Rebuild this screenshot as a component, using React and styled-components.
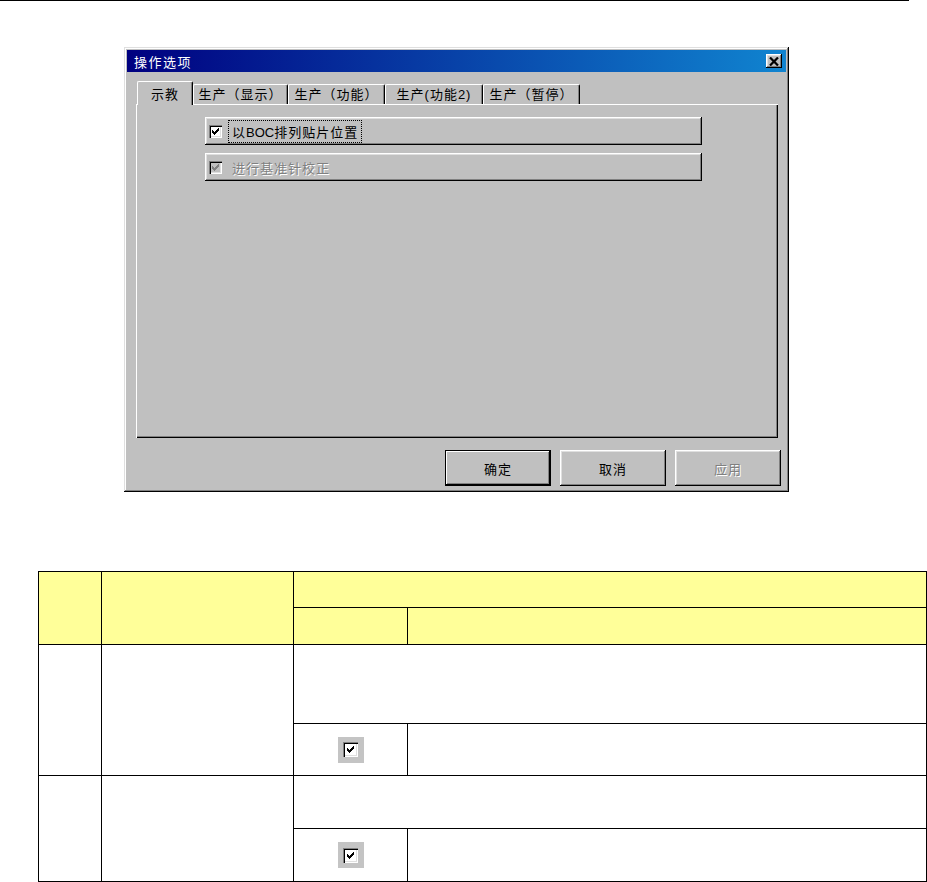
import styled, { createGlobalStyle, css } from 'styled-components'

const GlobalStyle = createGlobalStyle`
	body {
		margin: 0;
		background: #fff;
		font-family: "Liberation Sans", "Noto Sans CJK SC", sans-serif;
	}
`

const raised = css`
	box-shadow: inset -1px -1px #000, inset 1px 1px #fff, inset -2px -2px #808080, inset 2px 2px #dfdfdf;
`

const TopRule = styled.div`
	width: 909px;
	height: 1px;
	background: #000;
`

const Dialog = styled.div`
	margin: 46px 0 0 124px;
	width: 665px;
	height: 445px;
	box-sizing: border-box;
	padding: 3px;
	background: #c0c0c0;
	box-shadow: inset -1px -1px #000, inset 1px 1px #dfdfdf, inset -2px -2px #808080, inset 2px 2px #fff;
	display: flex;
	flex-direction: column;
`

const TitleBar = styled.div`
	height: 22px;
	display: flex;
	align-items: center;
	padding: 0 4px 0 7px;
	background: linear-gradient(90deg, #000080, #1084d0);
	color: #fff;
	font-size: 13px;
	letter-spacing: 1.5px;
`

const CloseButton = styled.div`
	margin-left: auto;
	width: 16px;
	height: 14px;
	background: #c0c0c0;
	${raised}
	display: flex;
	align-items: center;
	justify-content: center;
`

const TabArea = styled.div`
	margin: 9px 0 0 9px;
	width: 642px;
`

const TabStrip = styled.div`
	display: flex;
	align-items: flex-end;
	height: 23px;
	padding-left: 1px;
	position: relative;
	z-index: 1;
`

const Tab = styled.div`
	width: ${(p) => p.$w}px;
	height: ${(p) => (p.$active ? 24 : 20)}px;
	margin-bottom: ${(p) => (p.$active ? -1 : 0)}px;
	padding-bottom: ${(p) => (p.$active ? 1 : 3)}px;
	box-sizing: border-box;
	background: #c0c0c0;
	border-top: 1px solid #fff;
	border-left: 1px solid #fff;
	border-right: 1px solid #000;
	border-radius: 2px 2px 0 0;
	box-shadow: inset -1px 0 #808080;
	display: flex;
	align-items: center;
	justify-content: center;
	font-size: 13px;
	letter-spacing: 1px;
	white-space: nowrap;
`

const Panel = styled.div`
	height: 334px;
	box-sizing: border-box;
	padding: 13px 0 0 69px;
	box-shadow: inset 1px 1px #fff, inset -1px -1px #000, inset -2px -2px #808080;
	display: flex;
	flex-direction: column;
	gap: 8px;
`

const CheckButton = styled.div`
	width: 497px;
	height: 28px;
	box-sizing: border-box;
	padding-left: 4px;
	${raised}
	display: flex;
	align-items: center;
`

const Box = styled.div`
	width: ${(p) => p.$size}px;
	height: ${(p) => p.$size}px;
	flex: none;
	display: flex;
	align-items: center;
	justify-content: center;
	background: ${(p) => (p.$disabled ? '#c0c0c0' : '#fff')};
	box-shadow: inset 1px 1px #808080, inset 2px 2px #000, inset -1px -1px #fff, inset -2px -2px #dfdfdf;
`

const Label = styled.span`
	margin-left: 6px;
	padding: 1px 3px;
	font-size: 13px;
	letter-spacing: 1px;
	border: 1px dotted ${(p) => (p.$focus ? '#000' : 'transparent')};
	color: ${(p) => (p.$disabled ? '#808080' : '#000')};
	text-shadow: ${(p) => (p.$disabled ? '1px 1px #fff' : 'none')};
`

const Latin = styled.span`
	letter-spacing: 0;
`

const ButtonRow = styled.div`
	margin-top: 12px;
	padding-right: 5px;
	display: flex;
	justify-content: flex-end;
	gap: 9px;
`

const PushButton = styled.div`
	width: 106px;
	height: 36px;
	box-sizing: border-box;
	background: #c0c0c0;
	display: flex;
	align-items: center;
	justify-content: center;
	font-size: 13px;
	letter-spacing: 1px;
	color: ${(p) => (p.$disabled ? '#808080' : '#000')};
	text-shadow: ${(p) => (p.$disabled ? '1px 1px #fff' : 'none')};
	box-shadow: ${(p) =>
		p.$default
			? 'inset 0 0 0 1px #000, inset -2px -2px #000, inset 2px 2px #fff, inset -3px -3px #808080'
			: 'inset -1px -1px #000, inset 1px 1px #fff, inset -2px -2px #808080, inset 2px 2px #dfdfdf'};
`

const Grid = styled.table`
	margin: 79px 0 0 38px;
	width: 888px;
	border-collapse: collapse;
	table-layout: fixed;

	th,
	td {
		border: 1px solid #000;
		padding: 0;
	}

	th {
		background: #ffff99;
	}
`

const Row = styled.tr`
	height: ${(p) => p.$h}px;
`

const TableCheck = styled.div`
	width: 26px;
	height: 26px;
	margin: 0 auto;
	background: #c4c4c4;
	display: flex;
	align-items: center;
	justify-content: center;
`

const CHECK = [
	[3, 5], [4, 6], [5, 7], [6, 6], [7, 5], [8, 4], [9, 3],
]

function Checkbox({ disabled, size = 13 }) {
	return (
		<Box $disabled={disabled} $size={size}>
			<svg width="13" height="13" shapeRendering="crispEdges">
				{CHECK.map(([x, y]) => (
					<rect key={x} x={x} y={y} width="1" height="3" fill={disabled ? '#808080' : '#000'} />
				))}
			</svg>
		</Box>
	)
}

const tabs = [
	{ label: '示教', w: 56 },
	{ label: '生产（显示）', w: 95 },
	{ label: '生产（功能）', w: 97 },
	{ label: '生产(功能2)', w: 98 },
	{ label: '生产（暂停）', w: 97 },
]

export default function App() {
	return (
		<>
			<GlobalStyle />
			<TopRule />
			<Dialog>
				<TitleBar>
					操作选项
					<CloseButton>
						<svg width="10" height="9" viewBox="0 0 10 9">
							<path d="M1 0.5 L9 8.5 M9 0.5 L1 8.5" stroke="#000" strokeWidth="2.2" />
						</svg>
					</CloseButton>
				</TitleBar>
				<TabArea>
					<TabStrip>
						{tabs.map((t, i) => (
							<Tab key={t.label} $w={t.w} $active={i === 0}>
								{t.label}
							</Tab>
						))}
					</TabStrip>
					<Panel>
						<CheckButton>
							<Checkbox />
							<Label $focus>
								以<Latin>BOC</Latin>排列贴片位置
							</Label>
						</CheckButton>
						<CheckButton>
							<Checkbox disabled />
							<Label $disabled>进行基准针校正</Label>
						</CheckButton>
					</Panel>
				</TabArea>
				<ButtonRow>
					<PushButton $default>确定</PushButton>
					<PushButton>取消</PushButton>
					<PushButton $disabled>应用</PushButton>
				</ButtonRow>
			</Dialog>
			<Grid>
				<colgroup>
					<col style={{ width: 63 }} />
					<col style={{ width: 192 }} />
					<col style={{ width: 114 }} />
					<col style={{ width: 519 }} />
				</colgroup>
				<thead>
					<Row $h={36}>
						<th rowSpan={2} />
						<th rowSpan={2} />
						<th colSpan={2} />
					</Row>
					<Row $h={37}>
						<th />
						<th />
					</Row>
				</thead>
				<tbody>
					<Row $h={79}>
						<td rowSpan={2} />
						<td rowSpan={2} />
						<td colSpan={2} />
					</Row>
					<Row $h={52}>
						<td>
							<TableCheck>
								<Checkbox size={15} />
							</TableCheck>
						</td>
						<td />
					</Row>
					<Row $h={53}>
						<td rowSpan={2} />
						<td rowSpan={2} />
						<td colSpan={2} />
					</Row>
					<Row $h={53}>
						<td>
							<TableCheck>
								<Checkbox size={15} />
							</TableCheck>
						</td>
						<td />
					</Row>
				</tbody>
			</Grid>
		</>
	)
}
